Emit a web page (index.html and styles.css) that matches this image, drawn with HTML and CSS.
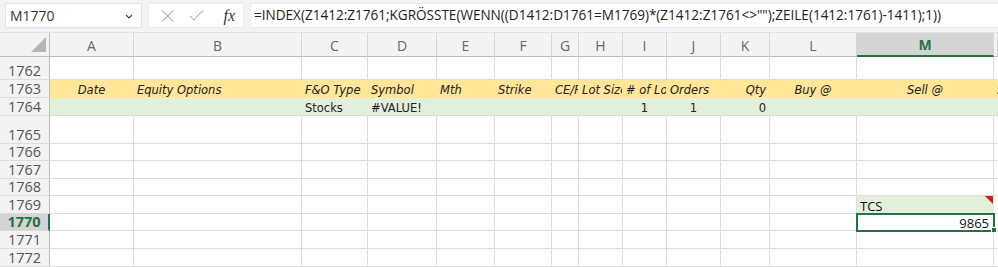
FILE: index.html
```html
<!DOCTYPE html>
<html lang="de">
<head>
  <meta charset="UTF-8">
  <title>Mappe1 - Excel</title>
  <link rel="stylesheet" href="styles.css">
</head>
<body>
  <div class="toolbar">
    <div class="namebox">
      <span>M1770</span>
      <svg class="chev" width="8" height="5" viewBox="0 0 8 5"><polyline points="1,1 4,4 7,1" fill="none" stroke="#444" stroke-width="1.2"/></svg>
    </div>
    <div class="fxbox">
      <svg width="14" height="14" viewBox="0 0 14 14"><path d="M1 1 L13 13 M13 1 L1 13" stroke="#b0b0b0" stroke-width="1.1"/></svg>
      <svg width="16" height="13" viewBox="0 0 16 13"><polyline points="1,7 5,11 15,1" fill="none" stroke="#b0b0b0" stroke-width="1.1"/></svg>
      <span class="fx">fx</span>
    </div>
    <div class="formula">=INDEX(Z1412:Z1761;KGRÖSSTE(WENN((D1412:D1761=M1769)*(Z1412:Z1761&lt;&gt;"");ZEILE(1412:1761)-1411);1))</div>
  </div>

  <div class="sheet">
    <div class="row head">
      <div class="rh corner"><span class="tri"></span></div>
      <div class="ch">A</div><div class="ch">B</div><div class="ch">C</div><div class="ch">D</div><div class="ch">E</div><div class="ch">F</div><div class="ch">G</div><div class="ch">H</div><div class="ch">I</div><div class="ch">J</div><div class="ch">K</div><div class="ch">L</div><div class="ch sel">M</div><div class="ch"></div>
    </div>

    <div class="row h23">
      <div class="rh">1762</div>
      <div class="c"></div><div class="c"></div><div class="c"></div><div class="c"></div><div class="c"></div><div class="c"></div><div class="c"></div><div class="c"></div><div class="c"></div><div class="c"></div><div class="c"></div><div class="c"></div><div class="c"></div><div class="c"></div>
    </div>

    <div class="row h18 yellow">
      <div class="rh">1763</div>
      <div class="c it mid">Date</div>
      <div class="c it">Equity Options</div>
      <div class="c it">F&amp;O Type</div>
      <div class="c it">Symbol</div>
      <div class="c it">Mth</div>
      <div class="c it">Strike</div>
      <div class="c it">CE/PE</div>
      <div class="c it">Lot Size</div>
      <div class="c it"># of Lots</div>
      <div class="c it">Orders</div>
      <div class="c it end">Qty</div>
      <div class="c it mid">Buy @</div>
      <div class="c it mid">Sell @</div>
      <div class="c it">SL</div>
    </div>

    <div class="row h18 green">
      <div class="rh">1764</div>
      <div class="c"></div>
      <div class="c"></div>
      <div class="c vd">Stocks</div>
      <div class="c vd">#VALUE!</div>
      <div class="c"></div>
      <div class="c"></div>
      <div class="c"></div>
      <div class="c"></div>
      <div class="c vd mid">1</div>
      <div class="c vd mid">1</div>
      <div class="c vd end">0</div>
      <div class="c"></div>
      <div class="c"></div>
      <div class="c"></div>
    </div>

    <div class="row h28">
      <div class="rh">1765</div>
      <div class="c"></div><div class="c"></div><div class="c"></div><div class="c"></div><div class="c"></div><div class="c"></div><div class="c"></div><div class="c"></div><div class="c"></div><div class="c"></div><div class="c"></div><div class="c"></div><div class="c"></div><div class="c"></div>
    </div>

    <div class="row h17">
      <div class="rh">1766</div>
      <div class="c"></div><div class="c"></div><div class="c"></div><div class="c"></div><div class="c"></div><div class="c"></div><div class="c"></div><div class="c"></div><div class="c"></div><div class="c"></div><div class="c"></div><div class="c"></div><div class="c"></div><div class="c"></div>
    </div>

    <div class="row h18">
      <div class="rh">1767</div>
      <div class="c"></div><div class="c"></div><div class="c"></div><div class="c"></div><div class="c"></div><div class="c"></div><div class="c"></div><div class="c"></div><div class="c"></div><div class="c"></div><div class="c"></div><div class="c"></div><div class="c"></div><div class="c"></div>
    </div>

    <div class="row h17">
      <div class="rh">1768</div>
      <div class="c"></div><div class="c"></div><div class="c"></div><div class="c"></div><div class="c"></div><div class="c"></div><div class="c"></div><div class="c"></div><div class="c"></div><div class="c"></div><div class="c"></div><div class="c"></div><div class="c"></div><div class="c"></div>
    </div>

    <div class="row h18">
      <div class="rh">1769</div>
      <div class="c"></div><div class="c"></div><div class="c"></div><div class="c"></div><div class="c"></div><div class="c"></div><div class="c"></div><div class="c"></div><div class="c"></div><div class="c"></div><div class="c"></div>
      <div class="c"></div>
      <div class="c cal fill note">TCS</div>
      <div class="c"></div>
    </div>

    <div class="row h17">
      <div class="rh sel">1770</div>
      <div class="c"></div><div class="c"></div><div class="c"></div><div class="c"></div><div class="c"></div><div class="c"></div><div class="c"></div><div class="c"></div><div class="c"></div><div class="c"></div><div class="c"></div>
      <div class="c"></div>
      <div class="c cal end active">9865<span class="handle"></span></div>
      <div class="c"></div>
    </div>

    <div class="row h18">
      <div class="rh">1771</div>
      <div class="c"></div><div class="c"></div><div class="c"></div><div class="c"></div><div class="c"></div><div class="c"></div><div class="c"></div><div class="c"></div><div class="c"></div><div class="c"></div><div class="c"></div><div class="c"></div><div class="c"></div><div class="c"></div>
    </div>

    <div class="row h18">
      <div class="rh">1772</div>
      <div class="c"></div><div class="c"></div><div class="c"></div><div class="c"></div><div class="c"></div><div class="c"></div><div class="c"></div><div class="c"></div><div class="c"></div><div class="c"></div><div class="c"></div><div class="c"></div><div class="c"></div><div class="c"></div>
    </div>
  </div>
</body>
</html>
```

FILE: styles.css
```css
*{ box-sizing: border-box;}
body{ margin: 0; background: #fff; overflow: hidden; font-family: "Open Sans", "Noto Sans", sans-serif; color: #222;}

/* formula bar */
.toolbar{ height: 33px; background: #f3f3f3; display: flex; align-items: flex-start; padding: 3px 0 0 5px; gap: 6px; border-bottom: 1px solid #e2e2e2;}
.namebox{ width: 137px; height: 25px; background: #fff; border: 1px solid #e4e4e4; display: flex; align-items: center; justify-content: space-between; padding: 0 8px 0 4px; font-size: 14px; color: #333;}
.chev{ margin-top: 2px;}
.fxbox{ width: 96px; height: 25px; background: #fff; border: 1px solid #ececec; display: flex; align-items: center; padding: 0 8px 0 12px; gap: 15px;}
.fx{ font-family: "Liberation Serif", serif; font-style: italic; font-size: 16px; color: #333; margin-left: 4px;}
.formula{ flex: 1; height: 25px; background: #fff; border: 1px solid #ececec; border-right: none; font-size: 13.55px; line-height: 23px; padding-left: 3px; white-space: nowrap; overflow: hidden; color: #222;}

/* grid */
.row{ display: grid; grid-template-columns: 50px 84px 168px 66px 69px 58px 57px 27px 44px 44px 54px 49px 87px 137px 1fr;}
.head{ height: 24px; background: #f3f3f3;}
.h23{ height: 23px;}
.h18{ height: 18px;}
.h17{ height: 17px;}
.h28{ height: 28px;}

.ch{ border-right: 1px solid #d6d6d6; border-bottom: 1px solid #bdbdbd; font-size: 14px; color: #666; display: flex; align-items: center; justify-content: center; padding-top: 1px;}
.ch.sel{ background: #d4d4d4; color: #217346; font-weight: bold; border-bottom: 2px solid #217346;}

.rh{ background: #f3f3f3; border-right: 1px solid #bdbdbd; border-bottom: 1px solid #dcdcdc; font-size: 14.5px; color: #555; display: flex; align-items: flex-end; justify-content: center; line-height: 16px;}
.rh.sel{ background: #d4d4d4; color: #217346; font-weight: bold; border-right: 2px solid #217346;}
.corner{ position: relative; border-bottom: 1px solid #bdbdbd;}
.tri{ position: absolute; right: 3px; bottom: 4px; width: 0; height: 0; border-left: 15px solid transparent; border-bottom: 15px solid #b5b5b5;}

.c{ border-right: 1px solid #dcdcdc; border-bottom: 1px solid #dcdcdc; display: flex; align-items: flex-end; white-space: nowrap; overflow: hidden; padding: 0 3px 0; font-size: 11.5px; line-height: 13px; position: relative;}
.it{ font-family: "DejaVu Sans", Verdana, sans-serif; font-style: italic;}
.vd{ font-family: "DejaVu Sans", Verdana, sans-serif;}
.cal{ font-family: "Open Sans", "Liberation Sans", sans-serif; font-size: 13px; color: #111; line-height: 14px;}
.mid{ justify-content: center;}
.end{ justify-content: flex-end;}

.yellow{ background: #ffe699;}
.yellow .c{ border-right-color: #ffe699; border-bottom-color: #ffe699;}
.green{ background: #e2efda;}
.green .c{ border-right-color: #e2efda; border-bottom-color: #d6dfd0;}
.fill{ background: #e2efda; border-right-color: #e2efda;}

.note::after{ content: ""; position: absolute; top: 0; right: 0; border-top: 8px solid #e0141e; border-left: 8px solid transparent;}
.active{ overflow: visible; outline: 2px solid #217346; outline-offset: -1px; z-index: 2; padding-right: 4px;}
.handle{ position: absolute; right: -4px; bottom: -3px; width: 6px; height: 6px; background: #217346; border: 1px solid #fff;}
```
